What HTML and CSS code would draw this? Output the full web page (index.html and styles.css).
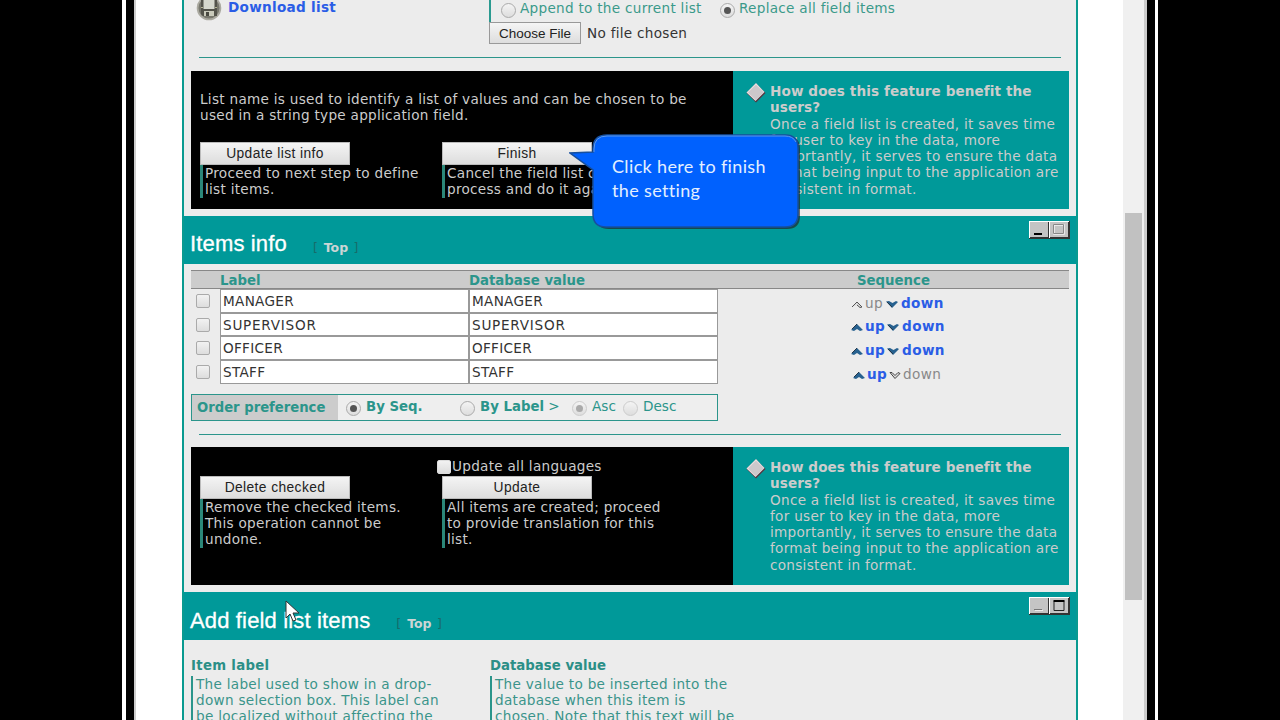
FILE: index.html
```html
<!DOCTYPE html>
<html lang="en">
<head>
<meta charset="utf-8">
<title>Field list</title>
<link rel="stylesheet" href="styles.css">
</head>
<body>
<div class="window">
<div class="content">
  <section class="upload">
    <div class="download">
      <svg class="disk" width="26" height="26" viewBox="0 0 26 26"><circle cx="13" cy="13" r="12.3" fill="#aaa9a0"/><circle cx="13" cy="13" r="10.5" fill="#77776d"/><path d="M5 3h16v18H7l-2-2z" fill="#53534b"/><path d="M7.500 3h11v11h-11z" fill="#d6d8ce"/><path d="M8 16h10v5H8z" fill="#c9cabb"/><path d="M10 17h3v4h-3z" fill="#494940"/><path d="M5 12.500h2m12 0h2" stroke="#b5b593"/></svg>
      <a class="link">Download list</a>
    </div>
    <div class="file">
      <div class="choices"><i class="radio"></i><span class="t2">Append to the current list</span><i class="radio on"></i><span class="t3">Replace all field items</span></div>
      <div class="choose"><button class="filebtn">Choose File</button><span class="t4">No file chosen</span></div>
    </div>
  </section>
  <div class="rule"></div>
  <section class="panel">
    <div class="actions">
      <p class="intro">List name is used to identify a list of values and can be chosen to be<br>used in a string type application field.</p>
      <div class="cols">
        <div class="act"><button class="btn">Update list info</button><p class="note">Proceed to next step to define<br>list items.</p></div>
        <div class="act"><button class="btn">Finish</button><p class="note">Cancel the field list creation<br>process and do it again.</p></div>
      </div>
    </div>
    <div class="benefit"><svg class="diamond" width="20" height="20" viewBox="0 0 20 20"><path d="M10 .5 19.500 10 10 19.500.5 10z" fill="#55353f"/><path d="M10 0 18.500 9 9.500 18 .5 9.500z" fill="#ecdde0"/><path d="M10 1.800 17.800 9.500 10 17.200 2 9.500z" fill="#ccc8cb"/></svg>
      <p><b>How does this feature benefit the<br>users?</b><br>Once a field list is created, it saves time<br>for user to key in the data, more<br>importantly, it serves to ensure the data<br>format being input to the application are<br>consistent in format.</p></div>
  </section>
  <header class="bar"><h2>Items info</h2><span class="top">[ <b>Top</b> ]</span>
    <svg class="winbtns" width="41" height="18" viewBox="0 0 41 18"><path d="M0 0h41v18H0z" fill="#333"/><path d="M0 0h40v1H1v16H0zM20 1h1v16h-1z" fill="#fff"/><path d="M1 1h18v15H1zM21 1h18v15H21z" fill="#c4c4c4"/><path d="M5 12h8v2H5z" fill="#000"/><path d="M25 4h10v9H25z" fill="none" stroke="#f4f4f4" stroke-width="1.500"/><path d="M24.500 3.500h10v9h-10z" fill="none" stroke="#888"/></svg>
  </header>
  <section class="items">
    <div class="thead"><span class="c1">Label</span><span class="c2">Database value</span><span class="c3">Sequence</span></div>
    <div class="row"><i class="check"></i><span class="field">MANAGER</span><span class="field">MANAGER</span><span class="seq"><svg class="arr" width="13" height="10" viewBox="0 0 13 10"><path d="m1 8 5-5 5 5-2 .5-3-2.500" fill="#ddd" stroke="#555"/></svg><span class="off">up</span><svg class="arr" width="13" height="10" viewBox="0 0 13 10"><path d="M0 2.500 3 2l3.500 2L10 2l2 1-6 6z" fill="#27618f"/><path d="m1 3 5 5" stroke="#263747"/></svg><a class="link">down</a></span></div>
    <div class="row"><i class="check"></i><span class="field wide">SUPERVISOR</span><span class="field wide">SUPERVISOR</span><span class="seq"><svg class="arr" width="13" height="10" viewBox="0 0 13 10"><path d="m0 8 6-6 6 6-3 1-3-2-3 2z" fill="#27618f"/><path d="m1 7 5-5" stroke="#263747"/></svg><a class="link">up</a><svg class="arr" width="13" height="10" viewBox="0 0 13 10"><path d="M0 2.500 3 2l3.500 2L10 2l2 1-6 6z" fill="#27618f"/><path d="m1 3 5 5" stroke="#263747"/></svg><a class="link">down</a></span></div>
    <div class="row"><i class="check"></i><span class="field">OFFICER</span><span class="field">OFFICER</span><span class="seq"><svg class="arr" width="13" height="10" viewBox="0 0 13 10"><path d="m0 8 6-6 6 6-3 1-3-2-3 2z" fill="#27618f"/><path d="m1 7 5-5" stroke="#263747"/></svg><a class="link">up</a><svg class="arr" width="13" height="10" viewBox="0 0 13 10"><path d="M0 2.500 3 2l3.500 2L10 2l2 1-6 6z" fill="#27618f"/><path d="m1 3 5 5" stroke="#263747"/></svg><a class="link">down</a></span></div>
    <div class="row"><i class="check"></i><span class="field">STAFF</span><span class="field">STAFF</span><span class="seq last"><svg class="arr" width="13" height="10" viewBox="0 0 13 10"><path d="m0 8 6-6 6 6-3 1-3-2-3 2z" fill="#27618f"/><path d="m1 7 5-5" stroke="#263747"/></svg><a class="link">up</a><svg class="arr" width="13" height="10" viewBox="0 0 13 10"><path d="m1 2.500 5 6 5-5-2-1-3 3-3-3z" fill="#ddd" stroke="#444"/></svg><span class="off">down</span></span></div>
    <div class="order"><b class="olabel">Order preference</b><i class="radio on r1"></i><b class="o1">By Seq.</b><i class="radio r2"></i><span class="o2"><b>By Label</b> &gt;</span><i class="radio on faint r3"></i><span class="o3">Asc</span><i class="radio faint r4"></i><span class="o4">Desc</span></div>
  </section>
  <div class="rule low"></div>
  <section class="panel second">
    <div class="actions">
      <div class="lang"><i class="check"></i><span>Update all languages</span></div>
      <div class="cols">
        <div class="act"><button class="btn">Delete checked</button><p class="note">Remove the checked items.<br>This operation cannot be<br>undone.</p></div>
        <div class="act"><button class="btn">Update</button><p class="note">All items are created; proceed<br>to provide translation for this<br>list.</p></div>
      </div>
    </div>
    <div class="benefit"><svg class="diamond" width="20" height="20" viewBox="0 0 20 20"><path d="M10 .5 19.500 10 10 19.500.5 10z" fill="#55353f"/><path d="M10 0 18.500 9 9.500 18 .5 9.500z" fill="#ecdde0"/><path d="M10 1.800 17.800 9.500 10 17.200 2 9.500z" fill="#ccc8cb"/></svg>
      <p><b>How does this feature benefit the<br>users?</b><br>Once a field list is created, it saves time<br>for user to key in the data, more<br>importantly, it serves to ensure the data<br>format being input to the application are<br>consistent in format.</p></div>
  </section>
  <header class="bar second"><h2>Add field list items</h2><span class="top">[ <b>Top</b> ]</span>
    <svg class="winbtns" width="41" height="18" viewBox="0 0 41 18"><path d="M0 0h41v18H0z" fill="#333"/><path d="M0 0h40v1H1v16H0zM20 1h1v16h-1z" fill="#fff"/><path d="M1 1h18v15H1zM21 1h18v15H21z" fill="#c4c4c4"/><path d="M5 12h8v1H5z" fill="#777"/><path d="M6 13h8v1H6z" fill="#eee"/><path d="M25 4.500h10v9H25z" fill="none" stroke="#222"/><path d="M24.500 3h11v2h-11z" fill="#000"/></svg>
  </header>
  <section class="add">
    <div class="addcol"><b class="t1">Item label</b><p>The label used to show in a drop-<br>down selection box. This label can<br>be localized without affecting the</p></div>
    <div class="addcol"><b>Database value</b><p>The value to be inserted into the<br>database when this item is<br>chosen. Note that this text will be</p></div>
  </section>
</div>
<div class="track"><div class="thumb"></div></div>
</div>
<div class="callout"><svg class="bubble" width="240" height="104" viewBox="0 0 240 104"><path d="M40 3H217Q230 3 230 16V83Q230 96 217 96H39Q26 96 26 83V39L2 21 26 20V17Q26 3 40 3z" fill="#222" opacity=".65" transform="translate(1 1)"/><path d="M38 3H216Q229 3 229 16V82Q229 95 216 95H37Q24 95 24 82V38L1 21 24 20V17Q24 3 38 3z" fill="#0061fe" stroke="#164f9e" stroke-width="1.500"/><path d="M25 20V17Q25 4 38 4H216Q224 4 227 10" fill="none" stroke="#5d98e8"/></svg><p>Click here to finish<br>the setting</p></div>
<svg class="cursor" width="16" height="24" viewBox="0 0 16 24"><path d="M1 1v17l4-4 3 7 3-1-3-7h6z" fill="#fff" stroke="#333"/></svg>
</body>
</html>
```
FILE: styles.css
```css
* { box-sizing: border-box; }
body { margin: 0; width: 1280px; height: 720px; overflow: hidden; position: relative; background: #000; display: flex; justify-content: flex-start; padding-left: 122px; font: 13.600px/16.1px "DejaVu Sans", Verdana, sans-serif; letter-spacing: .28px; color: #333; }
p, h2 { margin: 0; }
b { letter-spacing: 0; font-size: 13.300px; }
.window { width: 1036px; height: 720px; display: flex; background: #fff; border-left: 4px solid #fff; border-right: 3px solid #fff; box-shadow: inset 8px 0 #000, inset 10px 0 #ccc, inset -8px 0 #000, inset -11px 0 #ccc; }
.content { width: 896px; height: 720px; overflow: hidden; margin-left: 56px; flex: none; border: solid #099a90; border-width: 0 2px; background: #ececec; }
.track { margin-left: 45px; width: 21px; height: 720px; background: #f0f0f0; padding: 213px 2px 0; }
.thumb { height: 387px; background: #c1c1c1; }
.link { color: #2a5de6; font-weight: bold; }
.t1 { letter-spacing: .3px; }
.upload { height: 57px; display: flex; }
.download { width: 305px; display: flex; padding-left: 12px; }
.disk { margin-top: -5px; flex: none; }
.download .link { margin: -1px 0 0 6px; }
.file { color: #3a9a8a; }
.choices { height: 22px; display: flex; align-items: flex-start; border-left: 2px solid #2a9a90; padding-left: 10px; }
.choices .radio { margin-top: 3px; }
.choices span { margin-left: 4px; width: 200px; white-space: nowrap; }
.radio { width: 15px; height: 15px; flex: none; border-radius: 50%; border: 1px solid #aaa; background: linear-gradient(#f4f4f4, #ddd); display: flex; align-items: center; justify-content: center; }
.radio.on::after { content: ""; width: 7px; height: 7px; border-radius: 50%; background: #555; }
.radio.faint { border-color: #ccc; }
.radio.faint.on::after { background: #aaa; }
.choose { display: flex; color: #333; align-items: center; gap: 6px; }
.t4 { padding-top: 1px; }
button { font-family: "Liberation Sans", Arial, sans-serif; color: #222; padding: 0; border-radius: 0; white-space: nowrap; }
.filebtn { width: 92px; height: 22px; font-size: 13.500px; border: 1px solid #999; background: linear-gradient(#f5f5f5, #ddd); }
.rule { margin: 0 15px 13px; height: 1px; background: #2b958b; }
.rule.low { margin-bottom: 12px; }
.panel { margin: 0 7px 7px; height: 138px; display: flex; color: #ccc; }
.actions { width: 542px; background: #000; padding: 20px 0 0 9px; }
.cols { display: flex; margin-top: 19px; }
.act { width: 242px; }
.btn { display: block; width: 150px; height: 23px; font-size: 13.800px; letter-spacing: .4px; border: 1px solid #bbb; background: linear-gradient(#f4f4f4, #ddd); }
.note { border-left: 3px solid #2b8779; padding: 0 0 1px 2px; white-space: nowrap; }
.benefit { flex: 1; background: #009999; display: flex; padding: 12px 0 0 13px; }
.diamond { flex: none; margin-right: 4px; }
.benefit p { white-space: nowrap; line-height: 16.25px; }
.benefit b { font-size: inherit; letter-spacing: .08px; }
.bar { height: 48px; background: #009999; display: flex; padding-left: 6px; color: #fff; }
.bar h2 { font: 22px/26px "Liberation Sans", Arial, sans-serif; letter-spacing: .15px; margin-top: 15px; white-space: nowrap; -webkit-text-stroke: .3px #fff; }
.bar.second h2 { margin-top: 16px; }
.top { margin: 24px 0 0 26px; color: #176c6a; font-size: 12.500px; letter-spacing: .5px; white-space: nowrap; }
.top b { color: #ccd5d5; margin: 0 1px; font-size: 12.500px; }
.winbtns { margin: 5px 6px 0 auto; }
.items { height: 170px; padding: 6px 7px 0; }
.thead { height: 19px; border: solid #888; border-width: 1px 0; background: #ccc; color: #2b958b; font-weight: bold; display: flex; font-size: 13.300px; line-height: 19px; letter-spacing: 0; }
.c1 { margin-left: 29px; width: 249px; }
.c2 { width: 388px; }
.row { height: 23.670px; display: flex; }
.check { width: 14px; height: 14px; margin: 5px 10px 0 5px; flex: none; border: 1px solid #aaa; border-radius: 2px; background: linear-gradient(#f2f2f2, #ddd); }
.field { width: 249px; height: 23.670px; border: 1px solid #999; background: #fff; padding: 3px 0 0 2px; letter-spacing: .3px; }
.field.wide { letter-spacing: .75px; }
.seq { flex: 1; display: flex; padding: 5.600px 0 0; margin-left: 133px; white-space: nowrap; letter-spacing: .35px; }
.seq.last { padding-left: 2px; }
.arr { margin: 4px 1px 0 0; flex: none; }
.seq .link { margin-right: 2px; }
.off { color: #888; margin-right: 3px; }
.seq .link:last-child { margin-left: 1px; }
.order { margin-top: 10px; width: 527px; height: 27px; border: 1px solid #2b958b; display: flex; align-items: flex-start; color: #2b958b; background: #eee; white-space: nowrap; }
.olabel { background: #ccc; width: 146px; height: 25px; padding: 5px 0 0 5px; font-size: 13.200px; }
.order .radio { margin: 6px 5px 0 8px; }
.order span { padding-top: 3px; }
.order .o1 { padding-top: 4px; }
.o1 { width: 86px; }
.order .r2 { margin-left: 8px; }
.o2 { width: 86px; }
.order .o2, .order .o3, .order .o4 { letter-spacing: 0; }
.order .r3 { margin-left: 6px; }
.o3 { width: 28px; }
.order .r4 { margin-left: 3px; }
.second .actions { padding-top: 11px; }
.second .cols { margin-top: 2px; }
.lang { display: flex; margin-left: 237px; }
.lang .check { margin: 2px 1px 0 0; border-color: #ddd; }
.add { display: flex; padding: 17px 7px 0; color: #3a948a; }
.addcol { width: 299px; white-space: nowrap; }
.addcol b { color: #2b8f87; }
.addcol p { border-left: 2px solid #2b958b; padding-left: 3px; margin-top: 2px; }
.callout { position: absolute; left: 569px; top: 132px; width: 240px; height: 104px; color: #e4efff; font: 18px/24px Lato, "Liberation Sans", sans-serif; letter-spacing: .35px; }
.bubble { position: absolute; left: 0; top: 0; }
.callout p { position: relative; padding: 22px 0 0 43px; white-space: nowrap; }
.cursor { position: absolute; left: 285px; top: 600px; }
```
